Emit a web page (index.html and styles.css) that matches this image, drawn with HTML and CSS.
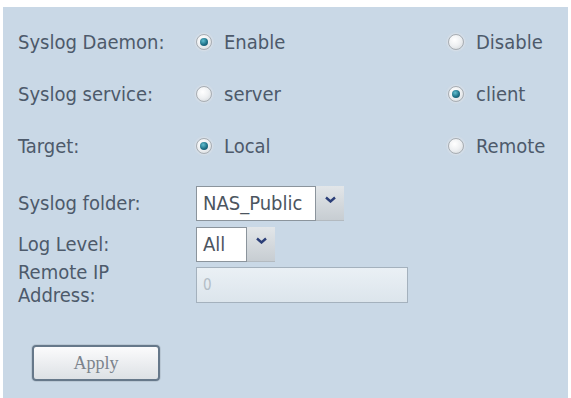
FILE: index.html
```html
<!DOCTYPE HTML>
<html>
    <head>
        <link rel="stylesheet" href="styles.css">
    </head>
    <body>
        <div class="panel">
            <div class="row radioRow">
                <div class="label">Syslog Daemon:</div>
                <div class="option"><span class="radio checked"></span>Enable</div>
                <div class="option right"><span class="radio"></span>Disable</div>
            </div>
            <div class="row radioRow">
                <div class="label">Syslog service:</div>
                <div class="option"><span class="radio"></span>server</div>
                <div class="option right"><span class="radio checked"></span>client</div>
            </div>
            <div class="row radioRow">
                <div class="label">Target:</div>
                <div class="option"><span class="radio checked"></span>Local</div>
                <div class="option right"><span class="radio"></span>Remote</div>
            </div>
            <div class="row folderRow">
                <div class="label">Syslog folder:</div>
                <div class="select">
                    <span class="selectText wide">NAS_Public</span>
                    <span class="selectArrow"><svg width="11" height="7" viewBox="0 0 11 7"><path d="M1 1.5 L5.5 5.5 L10 1.5" fill="none" stroke="#2c3f78" stroke-width="2.4"/></svg></span>
                </div>
            </div>
            <div class="row levelRow">
                <div class="label">Log Level:</div>
                <div class="select">
                    <span class="selectText narrow">All</span>
                    <span class="selectArrow"><svg width="11" height="7" viewBox="0 0 11 7"><path d="M1 1.5 L5.5 5.5 L10 1.5" fill="none" stroke="#2c3f78" stroke-width="2.4"/></svg></span>
                </div>
            </div>
            <div class="row ipRow">
                <div class="label">Remote IP<br>Address:</div>
                <div class="textbox">0</div>
            </div>
            <div class="buttonRow">
                <button class="apply">Apply</button>
            </div>
        </div>
    </body>
</html>
```

FILE: styles.css
```css
body {
    margin: 0;
    background: #ffffff;
}
.panel {
    margin: 7px 3px 0 3px;
    height: 391px;
    background: #c9d8e6;
    padding: 0 0 0 15px;
    box-sizing: border-box;
    font-family: "DejaVu Sans Condensed", "DejaVu Sans", sans-serif;
    font-size: 20px;
    color: #4d5a6b;
    overflow: hidden;
}
.row {
    display: flex;
    align-items: center;
}
.radioRow {
    height: 52px;
}
.radioRow:first-child {
    margin-top: 9px;
}
.label {
    width: 178px;
    flex: none;
    line-height: 23px;
}
.option {
    display: flex;
    align-items: center;
    width: 252px;
}
.option.right {
    width: auto;
}
.radio {
    width: 14px;
    height: 14px;
    border-radius: 50%;
    border: 1px solid #a9aeb3;
    background: radial-gradient(circle at 40% 35%, #ffffff 0, #eef0f2 50%, #cfd4d8 100%);
    box-shadow: 0 0 2px 1px rgba(225, 228, 232, 0.8);
    margin-right: 12px;
    flex: none;
    position: relative;
}
.radio.checked::after {
    content: "";
    position: absolute;
    left: 3px;
    top: 3px;
    width: 8px;
    height: 8px;
    border-radius: 50%;
    background: radial-gradient(circle at 40% 35%, #62bfd0 0, #1f7288 55%, #164a62 100%);
}
.folderRow {
    margin-top: 14px;
    height: 35px;
}
.levelRow {
    margin-top: 6px;
    height: 35px;
}
.ipRow {
    margin-top: 5px;
    align-items: flex-start;
    height: 56px;
}
.ipRow .label {
    margin-top: -6px;
}
.select {
    display: flex;
    height: 35px;
}
.selectText {
    background: #ffffff;
    border: 1px solid #8b949c;
    box-sizing: border-box;
    height: 35px;
    line-height: 33px;
    padding-left: 6px;
    color: #4c5560;
    font-size: 20px;
    white-space: nowrap;
    overflow: hidden;
}
.selectText.wide {
    width: 120px;
}
.selectText.narrow {
    width: 51px;
}
.selectArrow {
    width: 28px;
    height: 35px;
    background: linear-gradient(#e2e6e9, #c7cdd2);
    border-bottom: 1px solid #b3bac0;
    box-sizing: border-box;
    display: flex;
    justify-content: center;
    padding-top: 10px;
}
.textbox {
    width: 212px;
    height: 36px;
    box-sizing: border-box;
    border: 1px solid #a4b1bd;
    background: linear-gradient(#eaf0f5, #dce5ec);
    color: #b3bdc6;
    font-size: 15px;
    line-height: 34px;
    padding-left: 6px;
}
.buttonRow {
    margin-top: 22px;
    padding-left: 14px;
}
.apply {
    width: 128px;
    height: 36px;
    border: 2px solid #66788a;
    border-radius: 4px;
    background: linear-gradient(#fbfbfc, #dde1e5);
    font-family: "Liberation Serif", serif;
    font-size: 18px;
    color: #7b838c;
    box-shadow: 0 0 0 1px #b9c7d4;
}
```
